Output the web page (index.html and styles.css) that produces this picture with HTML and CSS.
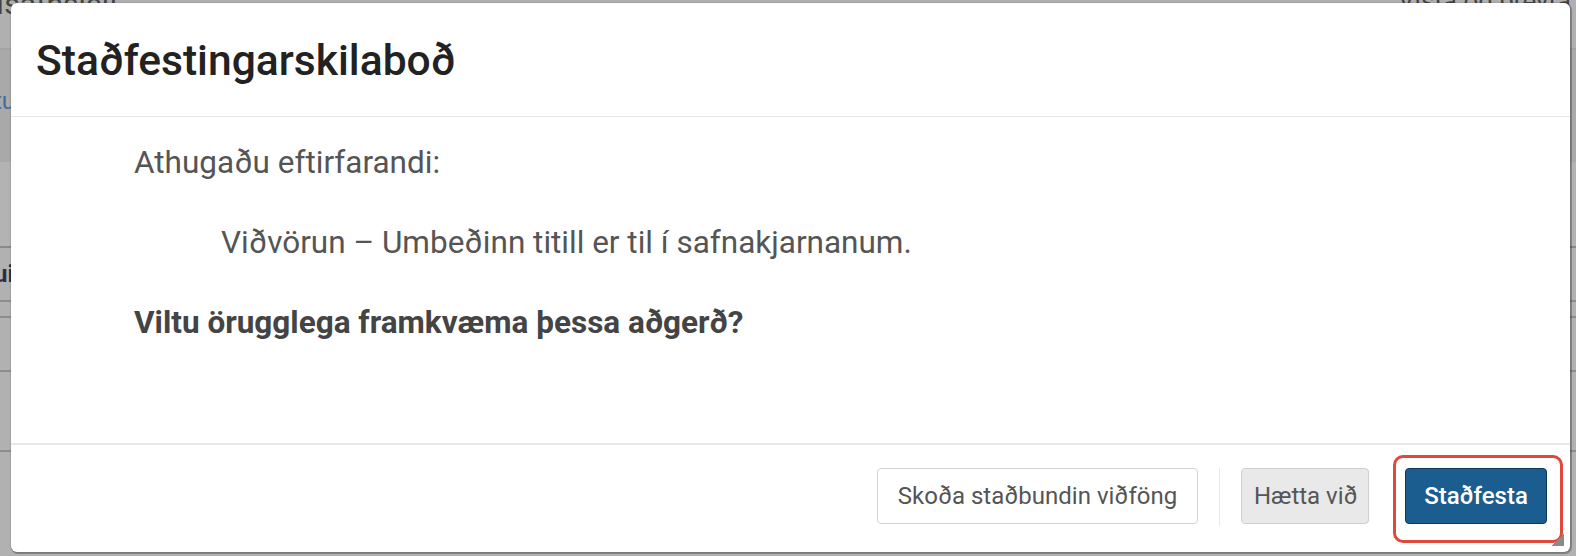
FILE: index.html
```html
<!DOCTYPE html>
<html lang="is">
<head>
<meta charset="utf-8">
<title>Staðfestingarskilaboð</title>
<link rel="stylesheet" href="styles.css">
</head>
<body>
<div class="page">
  <div class="bg-row r1"><span class="bg-left">Isafnsleit</span><span class="bg-right">Vista og breyta</span></div>
  <div class="bg-row r2"><span class="bg-link">tu</span></div>
  <div class="bg-row r3"></div>
  <div class="bg-row r4"><span class="bg-bold">ui</span></div>
  <div class="bg-row r5"></div>
  <div class="bg-row r6"></div>
  <div class="bg-row r7"></div>
  <div class="bg-row r8"><span class="bg-bottom">Strikamerki</span></div>
</div>

<div class="modal" role="dialog" aria-labelledby="mtitle">
  <div class="modal-header">
    <h1 id="mtitle" class="modal-title">Staðfestingarskilaboð</h1>
  </div>
  <div class="modal-body">
    <p class="line">Athugaðu eftirfarandi:</p>
    <p class="line indent">Viðvörun – Umbeðinn titill er til í safnakjarnanum.</p>
    <p class="line strong">Viltu örugglega framkvæma þessa aðgerð?</p>
  </div>
  <div class="modal-footer">
    <button class="btn btn-default">Skoða staðbundin viðföng</button>
    <span class="sep"></span>
    <button class="btn btn-muted">Hætta við</button>
    <span class="highlight"><button class="btn btn-primary">Staðfesta</button></span>
    <span class="grip"></span>
  </div>
</div>
</body>
</html>
```

FILE: styles.css
```css
html, body {
  margin: 0;
  padding: 0;
}
body {
  width: 1576px;
  height: 556px;
  overflow: hidden;
  background: #adadad;
  font-family: Roboto, "Liberation Sans", sans-serif;
  position: relative;
}
.page {
  display: flex;
  flex-direction: column;
  height: 556px;
}
.bg-row {
  position: relative;
  border-bottom: 2px solid #8e8e8e;
  box-sizing: border-box;
}
.r1 { height: 50px; background: #b0b0b0; border-bottom-color: #a4a4a4; }
.r2 { height: 112px; background: #a9a9a9; border-bottom: none; }
.r3 { height: 86px; background: #b3b3b3; border-bottom-color: #8a8a8a; }
.r4 { height: 54px; background: #b1b1b1; }
.r5 { height: 16px; background: #b1b1b1; }
.r6 { height: 54px; background: #b1b1b1; }
.r7 { height: 80px; background: #b1b1b1; }
.r8 { flex: 1; background: #b1b1b1; border-bottom: none; }
.bg-left {
  position: absolute; left: -4px; top: -14px;
  font-size: 30px; color: #444;
}
.bg-right {
  position: absolute; left: 1398px; top: -14px;
  font-size: 26px; color: #444;
}
.bg-link {
  position: absolute; left: -6px; top: 37px;
  font-size: 24px; color: #3f6c9c;
}
.bg-bold {
  position: absolute; left: -6px; top: 12px;
  font-size: 24px; font-weight: 700; color: #2a2f45;
}
.bg-bottom {
  position: absolute; left: 913px; top: 56px;
  font-size: 24px; color: #333;
}

.modal {
  position: absolute;
  left: 11px;
  top: 3px;
  width: 1559px;
  height: 549px;
  box-sizing: border-box;
  background: #fff;
  border-radius: 6px;
  box-shadow: 1px 1px 0 1px rgba(0,0,0,0.25), 0 0 2px rgba(0,0,0,0.3);
  display: flex;
  flex-direction: column;
  overflow: hidden;
}
.modal-header {
  height: 114px;
  box-sizing: border-box;
  border-bottom: 1px solid #e4e6e8;
  display: flex;
  align-items: center;
  padding: 0 25px;
}
.modal-title {
  margin: 0;
  font-size: 42.6px;
  font-weight: 500;
  color: #222;
}
.modal-body {
  flex: 1;
  padding: 27px 0 0 123px;
  display: flex;
  flex-direction: column;
  gap: 42px;
}
.line {
  margin: 0;
  font-size: 31.5px;
  line-height: 38px;
  color: #555;
}
.indent { padding-left: 87px; }
.strong { font-weight: 700; color: #444; }

.modal-footer {
  height: 109px;
  box-sizing: border-box;
  border-top: 2px solid #e7e8ec;
  display: flex;
  align-items: flex-start;
  justify-content: flex-end;
  padding: 23px 7px 0 0;
  position: relative;
}
.btn {
  font-family: Roboto, "Liberation Sans", sans-serif;
  font-size: 24px;
  height: 56px;
  box-sizing: border-box;
  border-radius: 4px;
  padding: 0 12px;
  white-space: nowrap;
  cursor: pointer;
}
.btn-default {
  background: #fff;
  border: 1px solid #d4d4d4;
  color: #555;
  width: 321px;
}
.sep {
  width: 1px;
  height: 58px;
  background: #e8e8e8;
  margin: 0 21px;
}
.btn-muted {
  background: #e9e9e9;
  border: 1px solid #cfcfcf;
  color: #555;
  width: 128px;
}
.highlight {
  margin-left: 24px;
  margin-top: -13px;
  padding: 10px 13px 16px 9px;
  border: 3px solid #e0493a;
  border-radius: 10px;
  display: flex;
}
.btn-primary {
  background: #1b5d8e;
  border: 1px solid #11375a;
  color: #fff;
  width: 142px;
  font-weight: 500;
  padding: 0 8px;
}
.grip {
  position: absolute;
  right: 6px;
  bottom: 6px;
  width: 12px;
  height: 12px;
  background: linear-gradient(135deg, transparent 50%, #8a8a8a 50%);
}
```
